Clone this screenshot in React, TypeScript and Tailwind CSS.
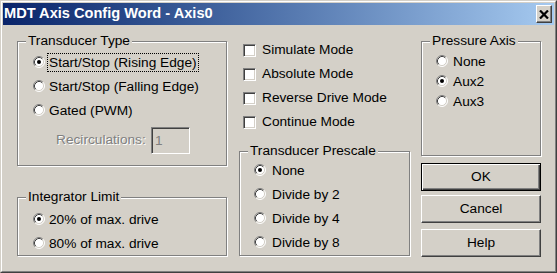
import React from "react";

const etched = "border border-[#808080] shadow-[inset_1px_1px_0_#fff,1px_1px_0_#fff]";

const Radio = ({ checked }: { checked?: boolean }) => (
  <svg width="12" height="12" viewBox="0 0 12 12" className="shrink-0">
    <circle cx="6" cy="6" r="5" fill="#fff" />
    <path d="M2.11 9.89 A5.5 5.5 0 0 1 9.89 2.11" fill="none" stroke="#808080" />
    <path d="M9.89 2.11 A5.5 5.5 0 0 1 2.11 9.89" fill="none" stroke="#fff" />
    <path d="M2.82 9.18 A4.5 4.5 0 0 1 9.18 2.82" fill="none" stroke="#404040" />
    <path d="M9.18 2.82 A4.5 4.5 0 0 1 2.82 9.18" fill="none" stroke="#d4d0c8" />
    {checked && <circle cx="6" cy="6" r="2" fill="#000" />}
  </svg>
);

const Checkbox = () => (
  <span className="w-[13px] h-[13px] shrink-0 bg-white border border-t-[#808080] border-l-[#808080] border-r-white border-b-white shadow-[inset_1px_1px_0_#404040,inset_-1px_-1px_0_#d4d0c8]" />
);

interface GroupProps {
  title: string;
  className: string;
  children: React.ReactNode;
}

const Group = ({ title, className, children }: GroupProps) => (
  <div className={`relative ${etched} ${className}`}>
    <span className="absolute left-[8px] top-[-9px] bg-[#d4d0c8] px-[2px] leading-4 whitespace-nowrap">
      {title}
    </span>
    {children}
  </div>
);

interface OptionProps {
  label: string;
  checked?: boolean;
  focused?: boolean;
  gap: string;
  height: string;
}

const Option = ({ label, checked, focused, gap, height }: OptionProps) => (
  <div className={`flex items-center ${height}`}>
    <Radio checked={checked} />
    <span
      className={`${gap} border px-px leading-[17px] whitespace-nowrap ${
        focused ? "border-dotted border-black" : "border-transparent"
      }`}
    >
      {label}
    </span>
  </div>
);

const Button = ({ label, primary, className }: { label: string; primary?: boolean; className: string }) => (
  <button
    className={`w-[120px] h-[28px] flex items-center justify-center bg-[#d4d0c8] ${
      primary
        ? "border border-black shadow-[inset_1px_1px_0_#fff,inset_-1px_-1px_0_#404040,inset_-2px_-2px_0_#808080]"
        : "border border-t-white border-l-white border-r-[#404040] border-b-[#404040] shadow-[inset_-1px_-1px_0_#808080]"
    } ${className}`}
  >
    {label}
  </button>
);

export default function App() {
  return (
    <div className="w-[557px] h-[273px] bg-[#d4d0c8] border border-t-[#d4d0c8] border-l-[#d4d0c8] border-r-[#404040] border-b-[#404040] font-['Liberation_Sans',Arial,sans-serif] text-[13.7px] text-black">
      <div className="h-full border border-t-white border-l-white border-r-[#808080] border-b-[#808080] p-px flex flex-col">
        {/* title bar */}
        <div className="h-[22px] shrink-0 flex items-center bg-gradient-to-r from-[#0a246a] to-[#a6caf0]">
          <span className="pl-[1px] text-white font-bold text-[14.6px] whitespace-nowrap">
            MDT Axis Config Word - Axis0
          </span>
          <div className="ml-auto mr-[2px] w-[16px] h-[18px] flex items-center justify-center bg-[#d4d0c8] border border-t-white border-l-white border-r-[#404040] border-b-[#404040] shadow-[inset_-1px_-1px_0_#808080]">
            <svg width="10" height="9" viewBox="0 0 10 9">
              <path d="M1 0.5 L9 8.5 M9 0.5 L1 8.5" stroke="#000" strokeWidth="2.2" />
            </svg>
          </div>
        </div>

        {/* body */}
        <div className="flex pl-[14px]">
          {/* left column */}
          <div className="flex flex-col pt-[16px] w-[210px]">
            <Group title="Transducer Type" className="h-[125px] pt-[8px] pl-[15px]">
              <Option label="Start/Stop (Rising Edge)" checked focused gap="ml-[2px]" height="h-[24px]" />
              <Option label="Start/Stop (Falling Edge)" gap="ml-[2px]" height="h-[24px]" />
              <Option label="Gated (PWM)" gap="ml-[2px]" height="h-[24px]" />
              <div className="flex items-center mt-[5px] ml-[23px]">
                <span className="w-[95px] text-[#808080] [text-shadow:1px_1px_0_#fff]">Recirculations:</span>
                <div className="w-[39px] h-[27px] border border-t-[#808080] border-l-[#808080] border-r-white border-b-white shadow-[inset_1px_1px_0_#404040,inset_-1px_-1px_0_#d4d0c8] pl-[3px] pt-[3px] text-[#808080]">
                  1
                </div>
              </div>
            </Group>
            <Group title="Integrator Limit" className="mt-[31px] h-[59px] pt-[9px] pl-[15px]">
              <Option label="20% of max. drive" checked gap="ml-[2px]" height="h-[24px]" />
              <Option label="80% of max. drive" gap="ml-[2px]" height="h-[24px]" />
            </Group>
          </div>

          {/* middle column */}
          <div className="flex flex-col pt-[13px] ml-[12px] w-[171px]">
            {["Simulate Mode", "Absolute Mode", "Reverse Drive Mode", "Continue Mode"].map((label) => (
              <div key={label} className="flex items-center h-[24px] pl-[4px]">
                <Checkbox />
                <span className="ml-[6px] whitespace-nowrap">{label}</span>
              </div>
            ))}
            <Group title="Transducer Prescale" className="mt-[17px] h-[105px] pt-[6px] pl-[14px]">
              <Option label="None" checked gap="ml-[4px]" height="h-[24px]" />
              <Option label="Divide by 2" gap="ml-[4px]" height="h-[24px]" />
              <Option label="Divide by 4" gap="ml-[4px]" height="h-[24px]" />
              <Option label="Divide by 8" gap="ml-[4px]" height="h-[24px]" />
            </Group>
          </div>

          {/* right column */}
          <div className="flex flex-col pt-[16px] ml-[11px] w-[120px]">
            <Group title="Pressure Axis" className="h-[115px] pt-[9px] pl-[14px]">
              <Option label="None" gap="ml-[3px]" height="h-[20px]" />
              <Option label="Aux2" checked gap="ml-[3px]" height="h-[20px]" />
              <Option label="Aux3" gap="ml-[3px]" height="h-[20px]" />
            </Group>
            <Button label="OK" primary className="mt-[7px]" />
            <Button label="Cancel" className="mt-[4px]" />
            <Button label="Help" className="mt-[6px]" />
          </div>
        </div>
      </div>
    </div>
  );
}
